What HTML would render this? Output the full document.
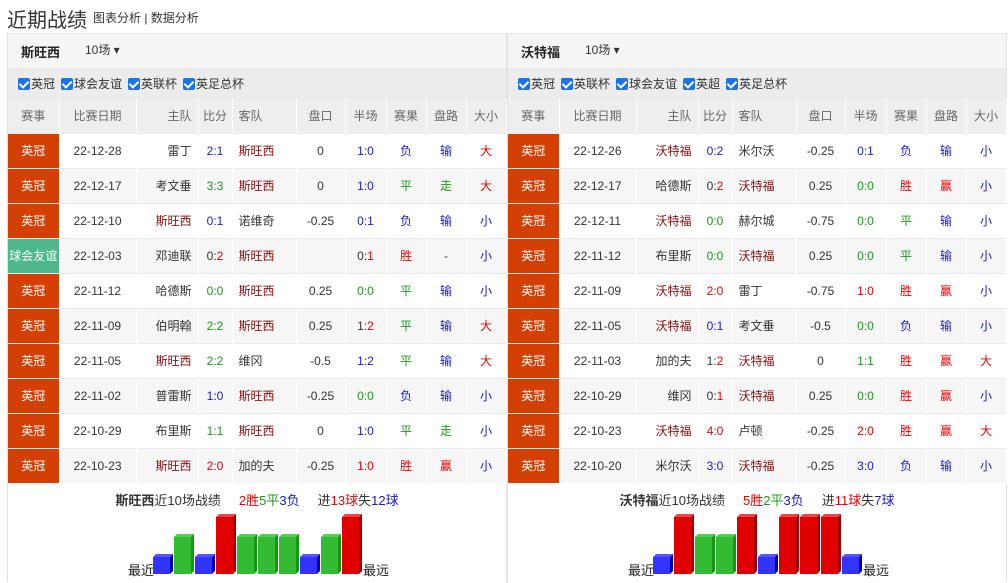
<!DOCTYPE html>
<html><head><meta charset="utf-8"><style>
*{margin:0;padding:0;box-sizing:border-box}
body{width:1008px;height:582px;overflow:hidden;background:#fff;font-family:"Liberation Sans","Noto Sans CJK SC",sans-serif;font-size:12px;color:#333;position:relative}
.title{position:absolute;left:7px;top:4px;font-size:20px;color:#333}
.sub{position:absolute;left:93px;top:9px;font-size:12px;color:#333}
.panel{position:absolute;top:33px;width:500px;height:549px;border:1px solid #e2e2e2;border-bottom:none}
.th{height:35px;background:#f5f5f5;border-bottom:1px solid #e6e6e6;position:relative}
.th b{position:absolute;left:13px;top:8px;font-size:13px;color:#222}
.th span{position:absolute;left:77px;top:7px;font-size:12px;color:#333}
.cb{height:30px;background:#ececec;padding-left:10px;padding-top:6px;font-size:12px;color:#333}
.cb i{display:inline-block;width:12px;height:12px;background:#1a73e8;border-radius:2px;vertical-align:-2px;position:relative;margin-right:1px}
.cb i:after{content:"";position:absolute;left:3px;top:1px;width:4px;height:7px;border:solid #fff;border-width:0 2px 2px 0;transform:rotate(45deg)}
.cb label{margin-right:6px}
table{border-collapse:collapse;width:498px;table-layout:fixed}
td{height:35px;text-align:center;font-size:12px;border-right:1px solid #fff;border-top:1px solid #e8e8e8;white-space:nowrap;overflow:hidden}
tr.h td{background:#eeeeee;color:#666;border-top:none;height:34px}
tr:nth-child(odd):not(.h) td{background:#f6f6f6}
td.l{background:#d43f04!important;color:#fff}
td.f{background:#4cb88b!important;color:#fff}
.r{color:#e00}.g{color:#1a9a1a}.b{color:#1a1ac8}.t{color:#8a0f0f}
.sum{position:absolute;top:456px;width:498px;text-align:center;font-size:13px}
.chart{position:absolute;left:0;top:0}
</style></head><body>
<div class="title">近期战绩</div>
<div class="sub">图表分析 | 数据分析</div>

<div class="panel" style="left:7px">
<div class="th"><b>斯旺西</b><span>10场 ▾</span></div>
<div class="cb"><label><i></i>英冠</label><label><i></i>球会友谊</label><label><i></i>英联杯</label><label><i></i>英足总杯</label></div>
<table>
<colgroup><col style="width:51px"><col style="width:77px"><col style="width:62px"><col style="width:34px"><col style="width:64px"><col style="width:49px"><col style="width:41px"><col style="width:40px"><col style="width:40px"><col style="width:40px"></colgroup>
<tr class="h"><td>赛事</td><td>比赛日期</td><td style="text-align:right;padding-right:6px">主队</td><td>比分</td><td style="text-align:left;padding-left:6px">客队</td><td>盘口</td><td>半场</td><td>赛果</td><td>盘路</td><td>大小</td></tr>
<tr><td class="l">英冠</td><td>22-12-28</td><td style="text-align:right;padding-right:6px">雷丁</td><td class="b">2:1</td><td class="t" style="text-align:left;padding-left:6px">斯旺西</td><td>0</td><td class="b">1:0</td><td class="b">负</td><td class="b">输</td><td class="r">大</td></tr>
<tr><td class="l">英冠</td><td>22-12-17</td><td style="text-align:right;padding-right:6px">考文垂</td><td class="g">3:3</td><td class="t" style="text-align:left;padding-left:6px">斯旺西</td><td>0</td><td class="b">1:0</td><td class="g">平</td><td class="g">走</td><td class="r">大</td></tr>
<tr><td class="l">英冠</td><td>22-12-10</td><td class="t" style="text-align:right;padding-right:6px">斯旺西</td><td class="b">0:1</td><td style="text-align:left;padding-left:6px">诺维奇</td><td>-0.25</td><td class="b">0:1</td><td class="b">负</td><td class="b">输</td><td class="b">小</td></tr>
<tr><td class="f">球会友谊</td><td>22-12-03</td><td style="text-align:right;padding-right:6px">邓迪联</td><td>0:<span class="r">2</span></td><td class="t" style="text-align:left;padding-left:6px">斯旺西</td><td></td><td>0:<span class="r">1</span></td><td class="r">胜</td><td>-</td><td class="b">小</td></tr>
<tr><td class="l">英冠</td><td>22-11-12</td><td style="text-align:right;padding-right:6px">哈德斯</td><td class="g">0:0</td><td class="t" style="text-align:left;padding-left:6px">斯旺西</td><td>0.25</td><td class="g">0:0</td><td class="g">平</td><td class="b">输</td><td class="b">小</td></tr>
<tr><td class="l">英冠</td><td>22-11-09</td><td style="text-align:right;padding-right:6px">伯明翰</td><td class="g">2:2</td><td class="t" style="text-align:left;padding-left:6px">斯旺西</td><td>0.25</td><td>1:<span class="r">2</span></td><td class="g">平</td><td class="b">输</td><td class="r">大</td></tr>
<tr><td class="l">英冠</td><td>22-11-05</td><td class="t" style="text-align:right;padding-right:6px">斯旺西</td><td class="g">2:2</td><td style="text-align:left;padding-left:6px">维冈</td><td>-0.5</td><td class="b">1:2</td><td class="g">平</td><td class="b">输</td><td class="r">大</td></tr>
<tr><td class="l">英冠</td><td>22-11-02</td><td style="text-align:right;padding-right:6px">普雷斯</td><td class="b">1:0</td><td class="t" style="text-align:left;padding-left:6px">斯旺西</td><td>-0.25</td><td class="g">0:0</td><td class="b">负</td><td class="b">输</td><td class="b">小</td></tr>
<tr><td class="l">英冠</td><td>22-10-29</td><td style="text-align:right;padding-right:6px">布里斯</td><td class="g">1:1</td><td class="t" style="text-align:left;padding-left:6px">斯旺西</td><td>0</td><td class="b">1:0</td><td class="g">平</td><td class="g">走</td><td class="b">小</td></tr>
<tr><td class="l">英冠</td><td>22-10-23</td><td class="t" style="text-align:right;padding-right:6px">斯旺西</td><td class="r">2:0</td><td style="text-align:left;padding-left:6px">加的夫</td><td>-0.25</td><td class="r">1:0</td><td class="r">胜</td><td class="r">赢</td><td class="b">小</td></tr>
</table>
<div class="sum"><b>斯旺西</b>近10场战绩&nbsp;&nbsp;&nbsp;&nbsp;&nbsp;<span class="r">2胜</span><span class="g">5平</span><span class="b">3负</span>&nbsp;&nbsp;&nbsp;&nbsp;&nbsp;进<span class="r">13球</span>失<span class="b">12球</span></div>
<svg class="chart" width="500" height="549" viewBox="7 33 500 549" font-family="Liberation Sans,Noto Sans CJK SC,sans-serif" font-size="13">
<text x="127" y="574" fill="#222">最近</text><text x="362" y="574" fill="#222">最远</text>
<g>
<polygon points="152,556 155,553 172,553 169,556" fill="#5555ff"/><rect x="152" y="556" width="17" height="17" fill="#3333ff"/><polygon points="169,556 172,553 172,570 169,573" fill="#0000c0"/>
<polygon points="173,536 176,533 193,533 190,536" fill="#55cc55"/><rect x="173" y="536" width="17" height="37" fill="#33bb33"/><polygon points="190,536 193,533 193,570 190,573" fill="#119911"/>
<polygon points="194,556 197,553 214,553 211,556" fill="#5555ff"/><rect x="194" y="556" width="17" height="17" fill="#3333ff"/><polygon points="211,556 214,553 214,570 211,573" fill="#0000c0"/>
<polygon points="215,516 218,513 235,513 232,516" fill="#ee4444"/><rect x="215" y="516" width="17" height="57" fill="#e00000"/><polygon points="232,516 235,513 235,570 232,573" fill="#a00000"/>
<polygon points="236,536 239,533 256,533 253,536" fill="#55cc55"/><rect x="236" y="536" width="17" height="37" fill="#33bb33"/><polygon points="253,536 256,533 256,570 253,573" fill="#119911"/>
<polygon points="257,536 260,533 277,533 274,536" fill="#55cc55"/><rect x="257" y="536" width="17" height="37" fill="#33bb33"/><polygon points="274,536 277,533 277,570 274,573" fill="#119911"/>
<polygon points="278,536 281,533 298,533 295,536" fill="#55cc55"/><rect x="278" y="536" width="17" height="37" fill="#33bb33"/><polygon points="295,536 298,533 298,570 295,573" fill="#119911"/>
<polygon points="299,556 302,553 319,553 316,556" fill="#5555ff"/><rect x="299" y="556" width="17" height="17" fill="#3333ff"/><polygon points="316,556 319,553 319,570 316,573" fill="#0000c0"/>
<polygon points="320,536 323,533 340,533 337,536" fill="#55cc55"/><rect x="320" y="536" width="17" height="37" fill="#33bb33"/><polygon points="337,536 340,533 340,570 337,573" fill="#119911"/>
<polygon points="341,516 344,513 361,513 358,516" fill="#ee4444"/><rect x="341" y="516" width="17" height="57" fill="#e00000"/><polygon points="358,516 361,513 361,570 358,573" fill="#a00000"/>
</g>
</svg>
</div>

<div class="panel" style="left:507px">
<div class="th"><b>沃特福</b><span>10场 ▾</span></div>
<div class="cb"><label><i></i>英冠</label><label><i></i>英联杯</label><label><i></i>球会友谊</label><label><i></i>英超</label><label><i></i>英足总杯</label></div>
<table>
<colgroup><col style="width:51px"><col style="width:77px"><col style="width:62px"><col style="width:34px"><col style="width:64px"><col style="width:49px"><col style="width:41px"><col style="width:40px"><col style="width:40px"><col style="width:40px"></colgroup>
<tr class="h"><td>赛事</td><td>比赛日期</td><td style="text-align:right;padding-right:6px">主队</td><td>比分</td><td style="text-align:left;padding-left:6px">客队</td><td>盘口</td><td>半场</td><td>赛果</td><td>盘路</td><td>大小</td></tr>
<tr><td class="l">英冠</td><td>22-12-26</td><td class="t" style="text-align:right;padding-right:6px">沃特福</td><td class="b">0:2</td><td style="text-align:left;padding-left:6px">米尔沃</td><td>-0.25</td><td class="b">0:1</td><td class="b">负</td><td class="b">输</td><td class="b">小</td></tr>
<tr><td class="l">英冠</td><td>22-12-17</td><td style="text-align:right;padding-right:6px">哈德斯</td><td>0:<span class="r">2</span></td><td class="t" style="text-align:left;padding-left:6px">沃特福</td><td>0.25</td><td class="g">0:0</td><td class="r">胜</td><td class="r">赢</td><td class="b">小</td></tr>
<tr><td class="l">英冠</td><td>22-12-11</td><td class="t" style="text-align:right;padding-right:6px">沃特福</td><td class="g">0:0</td><td style="text-align:left;padding-left:6px">赫尔城</td><td>-0.75</td><td class="g">0:0</td><td class="g">平</td><td class="b">输</td><td class="b">小</td></tr>
<tr><td class="l">英冠</td><td>22-11-12</td><td style="text-align:right;padding-right:6px">布里斯</td><td class="g">0:0</td><td class="t" style="text-align:left;padding-left:6px">沃特福</td><td>0.25</td><td class="g">0:0</td><td class="g">平</td><td class="b">输</td><td class="b">小</td></tr>
<tr><td class="l">英冠</td><td>22-11-09</td><td class="t" style="text-align:right;padding-right:6px">沃特福</td><td class="r">2:0</td><td style="text-align:left;padding-left:6px">雷丁</td><td>-0.75</td><td class="r">1:0</td><td class="r">胜</td><td class="r">赢</td><td class="b">小</td></tr>
<tr><td class="l">英冠</td><td>22-11-05</td><td class="t" style="text-align:right;padding-right:6px">沃特福</td><td class="b">0:1</td><td style="text-align:left;padding-left:6px">考文垂</td><td>-0.5</td><td class="g">0:0</td><td class="b">负</td><td class="b">输</td><td class="b">小</td></tr>
<tr><td class="l">英冠</td><td>22-11-03</td><td style="text-align:right;padding-right:6px">加的夫</td><td>1:<span class="r">2</span></td><td class="t" style="text-align:left;padding-left:6px">沃特福</td><td>0</td><td class="g">1:1</td><td class="r">胜</td><td class="r">赢</td><td class="r">大</td></tr>
<tr><td class="l">英冠</td><td>22-10-29</td><td style="text-align:right;padding-right:6px">维冈</td><td>0:<span class="r">1</span></td><td class="t" style="text-align:left;padding-left:6px">沃特福</td><td>0.25</td><td class="g">0:0</td><td class="r">胜</td><td class="r">赢</td><td class="b">小</td></tr>
<tr><td class="l">英冠</td><td>22-10-23</td><td class="t" style="text-align:right;padding-right:6px">沃特福</td><td class="r">4:0</td><td style="text-align:left;padding-left:6px">卢顿</td><td>-0.25</td><td class="r">2:0</td><td class="r">胜</td><td class="r">赢</td><td class="r">大</td></tr>
<tr><td class="l">英冠</td><td>22-10-20</td><td style="text-align:right;padding-right:6px">米尔沃</td><td class="b">3:0</td><td class="t" style="text-align:left;padding-left:6px">沃特福</td><td>-0.25</td><td class="b">3:0</td><td class="b">负</td><td class="b">输</td><td class="b">小</td></tr>
</table>
<div class="sum"><b>沃特福</b>近10场战绩&nbsp;&nbsp;&nbsp;&nbsp;&nbsp;<span class="r">5胜</span><span class="g">2平</span><span class="b">3负</span>&nbsp;&nbsp;&nbsp;&nbsp;&nbsp;进<span class="r">11球</span>失<span class="b">7球</span></div>
<svg class="chart" width="500" height="549" viewBox="7 33 500 549" font-family="Liberation Sans,Noto Sans CJK SC,sans-serif" font-size="13">
<text x="127" y="574" fill="#222">最近</text><text x="362" y="574" fill="#222">最远</text>
<g>
<polygon points="152,556 155,553 172,553 169,556" fill="#5555ff"/><rect x="152" y="556" width="17" height="17" fill="#3333ff"/><polygon points="169,556 172,553 172,570 169,573" fill="#0000c0"/>
<polygon points="173,516 176,513 193,513 190,516" fill="#ee4444"/><rect x="173" y="516" width="17" height="57" fill="#e00000"/><polygon points="190,516 193,513 193,570 190,573" fill="#a00000"/>
<polygon points="194,536 197,533 214,533 211,536" fill="#55cc55"/><rect x="194" y="536" width="17" height="37" fill="#33bb33"/><polygon points="211,536 214,533 214,570 211,573" fill="#119911"/>
<polygon points="215,536 218,533 235,533 232,536" fill="#55cc55"/><rect x="215" y="536" width="17" height="37" fill="#33bb33"/><polygon points="232,536 235,533 235,570 232,573" fill="#119911"/>
<polygon points="236,516 239,513 256,513 253,516" fill="#ee4444"/><rect x="236" y="516" width="17" height="57" fill="#e00000"/><polygon points="253,516 256,513 256,570 253,573" fill="#a00000"/>
<polygon points="257,556 260,553 277,553 274,556" fill="#5555ff"/><rect x="257" y="556" width="17" height="17" fill="#3333ff"/><polygon points="274,556 277,553 277,570 274,573" fill="#0000c0"/>
<polygon points="278,516 281,513 298,513 295,516" fill="#ee4444"/><rect x="278" y="516" width="17" height="57" fill="#e00000"/><polygon points="295,516 298,513 298,570 295,573" fill="#a00000"/>
<polygon points="299,516 302,513 319,513 316,516" fill="#ee4444"/><rect x="299" y="516" width="17" height="57" fill="#e00000"/><polygon points="316,516 319,513 319,570 316,573" fill="#a00000"/>
<polygon points="320,516 323,513 340,513 337,516" fill="#ee4444"/><rect x="320" y="516" width="17" height="57" fill="#e00000"/><polygon points="337,516 340,513 340,570 337,573" fill="#a00000"/>
<polygon points="341,556 344,553 361,553 358,556" fill="#5555ff"/><rect x="341" y="556" width="17" height="17" fill="#3333ff"/><polygon points="358,556 361,553 361,570 358,573" fill="#0000c0"/>
</g>
</svg>
</div>
</body></html>
